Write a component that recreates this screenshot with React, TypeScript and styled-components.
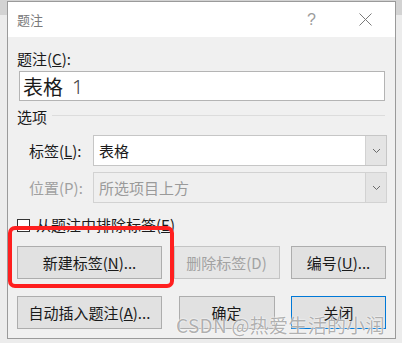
import styled, { createGlobalStyle } from 'styled-components';

const GlobalStyle = createGlobalStyle`
  html, body {
    margin: 0;
    padding: 0;
  }
  body {
    width: 402px;
    height: 343px;
    overflow: hidden;
    background: linear-gradient(#d3d3d3 0 15px, #ececec 15px);
    font-family: "Noto Sans CJK SC", "Noto Sans", sans-serif;
  }
`;

const Page = styled.div`
  padding: 1px 6px 0 7px;
`;

const Dialog = styled.div`
  position: relative;
  width: 387px;
  height: 336px;
  border: 1px solid #9a9a9a;
  background: #f0f0f0;
  display: flex;
  flex-direction: column;
`;

const TitleBar = styled.div`
  height: 35px;
  background: #fff;
  display: flex;
  align-items: center;
  padding: 0 0 0 9px;
  font-size: 13px;
  color: #7a7a7a;
`;

const Title = styled.span`
  flex: 1;
`;

const Help = styled.span`
  width: 10px;
  margin-right: 42px;
  font-family: "Liberation Sans", sans-serif;
  font-size: 16px;
  color: #9c9c9c;
`;

const Close = styled.svg`
  width: 13px;
  height: 13px;
  margin-right: 23px;
`;

const Body = styled.div`
  display: flex;
  flex-direction: column;
  padding: 12px 8px 0 9px;
`;

const Label = styled.div<{ $muted?: boolean }>`
  font-size: 15px;
  line-height: 20px;
  color: ${p => (p.$muted ? '#a0a0a0' : '#1a1a1a')};
  white-space: nowrap;
`;

const TextInput = styled.div`
  margin: 2px 2px 0 2px;
  height: 28px;
  border: 1px solid #b4b4b4;
  background: #fff;
  display: flex;
  align-items: center;
  padding-left: 3px;
  font-size: 20px;
  color: #1a1a1a;
`;

const Digit = styled.span`
  margin-left: 9px;
  font-family: "Noto Sans", sans-serif;
  font-weight: 300;
  font-size: 20px;
  color: #444;
`;

const GroupHead = styled.div`
  margin-top: 6px;
  display: flex;
  align-items: center;
  gap: 5px;
`;

const GroupLine = styled.div`
  flex: 1;
  height: 1px;
  margin: -3px 2px 0 0;
  background: #dcdcdc;
`;

const FieldRow = styled.div<{ $top: number }>`
  margin-top: ${p => p.$top}px;
  display: flex;
  align-items: center;
  padding-left: 12px;
`;

const FieldLabel = styled(Label)`
  width: 64px;
`;

const Select = styled.div<{ $disabled?: boolean }>`
  flex: 1;
  height: 29px;
  display: flex;
  border: 1px solid ${p => (p.$disabled ? '#d2d2d2' : '#c6c6c6')};
  background: ${p => (p.$disabled ? '#efefef' : '#fff')};
`;

const SelectValue = styled.div<{ $disabled?: boolean }>`
  flex: 1;
  display: flex;
  align-items: center;
  padding-left: 5px;
  font-size: 15px;
  color: ${p => (p.$disabled ? '#9a9a9a' : '#1a1a1a')};
`;

const Arrow = styled.div`
  width: 20px;
  border-left: 1px solid #d2d2d2;
  background: #e4e4e4;
  display: flex;
  align-items: center;
  justify-content: center;
`;

const CheckRow = styled.div`
  margin-top: 12px;
  display: flex;
  align-items: center;
  gap: 6px;
  height: 20px;
`;

const Box = styled.div`
  width: 11px;
  height: 11px;
  border: 1px solid #333;
  background: #fff;
`;

const ButtonRow = styled.div<{ $top: number }>`
  margin-top: ${p => p.$top}px;
  display: flex;
  justify-content: space-between;
  padding-right: 1px;
`;

const Button = styled.div<{ $w: number; $disabled?: boolean; $focus?: boolean }>`
  width: ${p => p.$w}px;
  height: 31px;
  box-sizing: content-box;
  display: flex;
  align-items: center;
  justify-content: center;
  font-size: 15px;
  background: ${p => (p.$disabled ? '#e6e6e6' : '#e1e1e1')};
  border: 1px solid ${p => (p.$focus ? '#0078d7' : p.$disabled ? '#c4c4c4' : '#adadad')};
  color: ${p => (p.$disabled ? '#a2a2a2' : '#1a1a1a')};
  white-space: nowrap;
`;

const Highlight = styled.div`
  position: absolute;
  left: 0;
  top: 224px;
  width: 158px;
  height: 54px;
  border: 4px solid #ff1f1f;
  border-radius: 7px;
`;

const Watermark = styled.div`
  position: absolute;
  left: 168px;
  top: 309px;
  font-size: 19px;
  letter-spacing: 0.3px;
  color: rgba(150, 150, 150, 0.75);
  text-shadow: 0 0 2px #fff, 0 0 1px #fff;
  white-space: nowrap;
`;

const Chevron = () => (
  <svg width="9" height="6" viewBox="0 0 9 6">
    <path d="M1 1 L4.5 4.5 L8 1" fill="none" stroke="#6a6a6a" strokeWidth="1" />
  </svg>
);

const App = () => {
  return (
    <>
      <GlobalStyle />
      <Page>
        <Dialog>
          <TitleBar>
            <Title>题注</Title>
            <Help>?</Help>
            <Close viewBox="0 0 13 13">
              <path d="M0.5 0.5 L12.5 12.5 M12.5 0.5 L0.5 12.5" stroke="#7a7a7a" strokeWidth="1" />
            </Close>
          </TitleBar>
          <Body>
            <Label>
              题注(<u>C</u>):
            </Label>
            <TextInput>
              表格<Digit>1</Digit>
            </TextInput>
            <GroupHead>
              <Label>选项</Label>
              <GroupLine />
            </GroupHead>
            <FieldRow $top={8}>
              <FieldLabel>
                标签(<u>L</u>):
              </FieldLabel>
              <Select>
                <SelectValue>表格</SelectValue>
                <Arrow>
                  <Chevron />
                </Arrow>
              </Select>
            </FieldRow>
            <FieldRow $top={6}>
              <FieldLabel $muted>位置(P):</FieldLabel>
              <Select $disabled>
                <SelectValue $disabled>所选项目上方</SelectValue>
                <Arrow>
                  <Chevron />
                </Arrow>
              </Select>
            </FieldRow>
            <CheckRow>
              <Box />
              <Label>
                从题注中排除标签(<u>E</u>)
              </Label>
            </CheckRow>
            <ButtonRow $top={11}>
              <Button $w={143}>
                新建标签(<u>N</u>)...
              </Button>
              <Button $w={104} $disabled>
                删除标签(D)
              </Button>
              <Button $w={93}>
                编号(<u>U</u>)...
              </Button>
            </ButtonRow>
            <ButtonRow $top={17}>
              <Button $w={143}>
                自动插入题注(<u>A</u>)...
              </Button>
              <Button $w={94}>确定</Button>
              <Button $w={93} $focus>
                关闭
              </Button>
            </ButtonRow>
          </Body>
          <Highlight />
          <Watermark>CSDN @热爱生活的小润</Watermark>
        </Dialog>
      </Page>
    </>
  );
};

export default App;
